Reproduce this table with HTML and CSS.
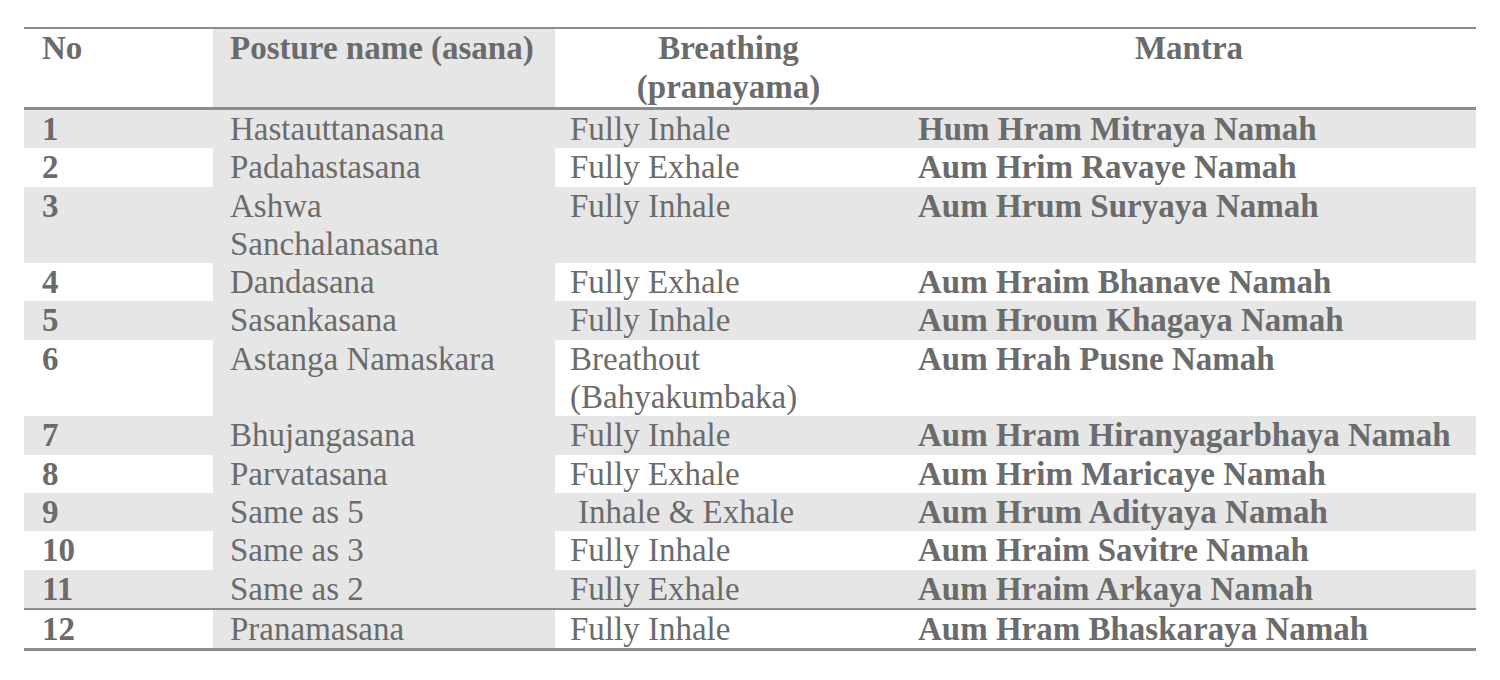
FILE: index.html
```html
<!DOCTYPE html>
<html lang="en">
<head>
<meta charset="utf-8">
<title>Surya Namaskar</title>
<link rel="stylesheet" href="styles.css">
</head>
<body>
<table class="asana-table">
  <colgroup>
    <col class="w1"><col class="w2"><col class="w3"><col class="w4">
  </colgroup>
  <thead>
    <tr>
      <th class="c1">No</th>
      <th class="c2">Posture name (asana)</th>
      <th class="c3 center">Breathing<br>(pranayama)</th>
      <th class="c4 center">Mantra</th>
    </tr>
  </thead>
  <tbody>
    <tr class="shade"><td class="c1">1</td><td class="c2">Hastauttanasana</td><td class="c3">Fully Inhale</td><td class="c4">Hum Hram Mitraya Namah</td></tr>
    <tr><td class="c1">2</td><td class="c2">Padahastasana</td><td class="c3">Fully Exhale</td><td class="c4">Aum Hrim Ravaye Namah</td></tr>
    <tr class="shade"><td class="c1">3</td><td class="c2">Ashwa<br>Sanchalanasana</td><td class="c3">Fully Inhale</td><td class="c4">Aum Hrum Suryaya Namah</td></tr>
    <tr><td class="c1">4</td><td class="c2">Dandasana</td><td class="c3">Fully Exhale</td><td class="c4">Aum Hraim Bhanave Namah</td></tr>
    <tr class="shade"><td class="c1">5</td><td class="c2">Sasankasana</td><td class="c3">Fully Inhale</td><td class="c4">Aum Hroum Khagaya Namah</td></tr>
    <tr><td class="c1">6</td><td class="c2">Astanga Namaskara</td><td class="c3">Breathout<br>(Bahyakumbaka)</td><td class="c4">Aum Hrah Pusne Namah</td></tr>
    <tr class="shade"><td class="c1">7</td><td class="c2">Bhujangasana</td><td class="c3">Fully Inhale</td><td class="c4">Aum Hram Hiranyagarbhaya Namah</td></tr>
    <tr><td class="c1">8</td><td class="c2">Parvatasana</td><td class="c3">Fully Exhale</td><td class="c4">Aum Hrim Maricaye Namah</td></tr>
    <tr class="shade"><td class="c1">9</td><td class="c2">Same as 5</td><td class="c3 indent">Inhale &amp; Exhale</td><td class="c4">Aum Hrum Adityaya Namah</td></tr>
    <tr><td class="c1">10</td><td class="c2">Same as 3</td><td class="c3">Fully Inhale</td><td class="c4">Aum Hraim Savitre Namah</td></tr>
    <tr class="shade last-group"><td class="c1">11</td><td class="c2">Same as 2</td><td class="c3">Fully Exhale</td><td class="c4">Aum Hraim Arkaya Namah</td></tr>
    <tr class="final"><td class="c1">12</td><td class="c2">Pranamasana</td><td class="c3">Fully Inhale</td><td class="c4">Aum Hram Bhaskaraya Namah</td></tr>
  </tbody>
</table>
</body>
</html>
```

FILE: styles.css
```css
html, body {
  margin: 0;
  padding: 0;
  background: #ffffff;
}

body {
  padding: 27px 24px 0 24px;
  font-family: "Liberation Serif", "Times New Roman", serif;
  color: #6b6b6b;
}

.asana-table {
  width: 1452px;
  table-layout: fixed;
  border-collapse: collapse;
  border-top: 2px solid #8c8c8c;
  border-bottom: 3px solid #8c8c8c;
  font-size: 33px;
}

.w1 { width: 189px; }
.w2 { width: 342px; }
.w3 { width: 347px; }
.w4 { width: 574px; }

.asana-table th,
.asana-table td {
  padding: 0;
  vertical-align: top;
  text-align: left;
  white-space: nowrap;
}

.asana-table thead th {
  line-height: 39px;
  font-weight: bold;
  border-bottom: 3px solid #8c8c8c;
}

.asana-table tbody td {
  line-height: 38.3px;
}

.asana-table .center {
  text-align: center;
}

.c1 { padding-left: 18px !important; font-weight: bold; }
.c2 { padding-left: 17px !important; background: #e6e6e6; font-weight: normal; }
.c3 { padding-left: 15px !important; font-weight: normal; }
.c4 { padding-left: 16px !important; font-weight: bold; }

.asana-table thead .c2,
.asana-table thead .c3 {
  font-weight: bold;
}

.asana-table thead .c3.center,
.asana-table thead .c4.center {
  padding-left: 0 !important;
}

.indent { padding-left: 23px !important; }

.shade td {
  background: #e6e6e6;
}

.last-group td {
  border-bottom: 2px solid #8c8c8c;
}
```
